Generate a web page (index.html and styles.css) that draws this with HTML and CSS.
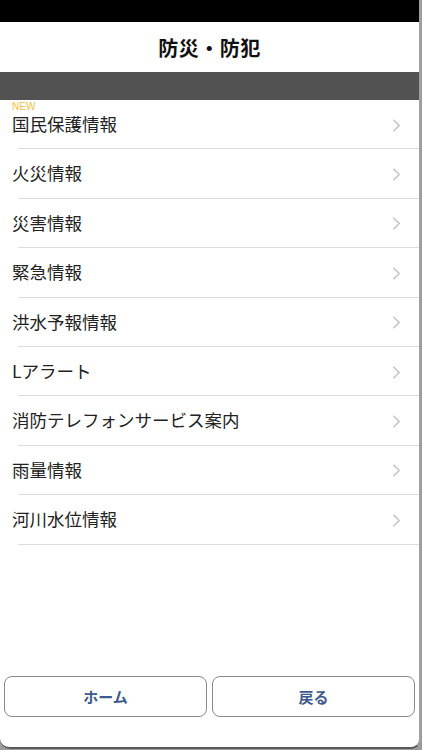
FILE: index.html
```html
<!DOCTYPE html>
<html lang="ja">
<head>
<meta charset="utf-8">
<link rel="stylesheet" href="styles.css">
</head>
<body>
<div class="frame">
  <div class="statusbar"></div>
  <header class="titlebar"><h1>防災・防犯</h1></header>
  <div class="subbar"></div>
  <ul class="list">
    <li class="row"><span class="new">NEW</span><span class="label">国民保護情報</span><svg class="chev" viewBox="0 0 10 16"><path d="M1.5 1.5 L8 8 L1.5 14.5"/></svg></li>
    <li class="row"><span class="label">火災情報</span><svg class="chev" viewBox="0 0 10 16"><path d="M1.5 1.5 L8 8 L1.5 14.5"/></svg></li>
    <li class="row"><span class="label">災害情報</span><svg class="chev" viewBox="0 0 10 16"><path d="M1.5 1.5 L8 8 L1.5 14.5"/></svg></li>
    <li class="row"><span class="label">緊急情報</span><svg class="chev" viewBox="0 0 10 16"><path d="M1.5 1.5 L8 8 L1.5 14.5"/></svg></li>
    <li class="row"><span class="label">洪水予報情報</span><svg class="chev" viewBox="0 0 10 16"><path d="M1.5 1.5 L8 8 L1.5 14.5"/></svg></li>
    <li class="row"><span class="label">Lアラート</span><svg class="chev" viewBox="0 0 10 16"><path d="M1.5 1.5 L8 8 L1.5 14.5"/></svg></li>
    <li class="row"><span class="label">消防テレフォンサービス案内</span><svg class="chev" viewBox="0 0 10 16"><path d="M1.5 1.5 L8 8 L1.5 14.5"/></svg></li>
    <li class="row"><span class="label">雨量情報</span><svg class="chev" viewBox="0 0 10 16"><path d="M1.5 1.5 L8 8 L1.5 14.5"/></svg></li>
    <li class="row"><span class="label">河川水位情報</span><svg class="chev" viewBox="0 0 10 16"><path d="M1.5 1.5 L8 8 L1.5 14.5"/></svg></li>
  </ul>
  <div class="spacer"></div>
  <footer class="buttons">
    <button class="btn">ホーム</button>
    <button class="btn">戻る</button>
  </footer>
</div>
</body>
</html>
```

FILE: styles.css
```css
* { box-sizing: border-box; }
html, body { margin: 0; padding: 0; }
body {
  width: 422px;
  height: 750px;
  background: #9c9c9c;
  font-family: "Noto Sans CJK JP", "Noto Sans", sans-serif;
  overflow: hidden;
}
.frame {
  width: 421px;
  height: 749px;
  background: #fff;
  border-right: 2px solid #a0a0a0;
  border-bottom: 2px solid #5a5a5a;
  border-bottom-left-radius: 10px;
  border-bottom-right-radius: 10px;
  display: flex;
  flex-direction: column;
  overflow: hidden;
}
.statusbar { height: 22px; background: #000; flex: none; }
.titlebar {
  height: 50px;
  flex: none;
  display: flex;
  align-items: center;
  justify-content: center;
}
.titlebar h1 {
  margin: 0;
  font-size: 20px;
  font-weight: 700;
  color: #111;
  letter-spacing: 0.5px;
}
.subbar { height: 28px; background: #525252; flex: none; }
.list { list-style: none; margin: 0; padding: 0; flex: none; }
.row {
  position: relative;
  height: 49.4px;
  display: flex;
  align-items: center;
  padding: 0 46px 2px 12px;
}
.row::after {
  content: "";
  position: absolute;
  left: 18px;
  right: 0;
  bottom: 0;
  height: 1px;
  background: #dcdcdc;
}
.label {
  font-size: 17.5px;
  color: #222;
  line-height: 1;
}
.new {
  position: absolute;
  left: 12px;
  top: 2px;
  font-family: "Liberation Sans", Arial, sans-serif;
  font-size: 10px;
  color: #f2c03c;
  line-height: 9px;
}
.chev {
  position: absolute;
  right: 18px;
  top: 50%;
  width: 9px;
  height: 15px;
  margin-top: -7px;
  fill: none;
  stroke: #c2c2c2;
  stroke-width: 1.6;
}
.spacer { flex: 1; }
.buttons {
  display: flex;
  gap: 5px;
  padding: 0 4px 30px 4px;
  flex: none;
}
.btn {
  flex: 1;
  height: 41px;
  background: #fff;
  border: 1px solid #8a8a8a;
  border-radius: 8px;
  font-family: "Noto Sans CJK JP", sans-serif;
  font-size: 15px;
  font-weight: 700;
  color: #3d5a8e;
}
```
